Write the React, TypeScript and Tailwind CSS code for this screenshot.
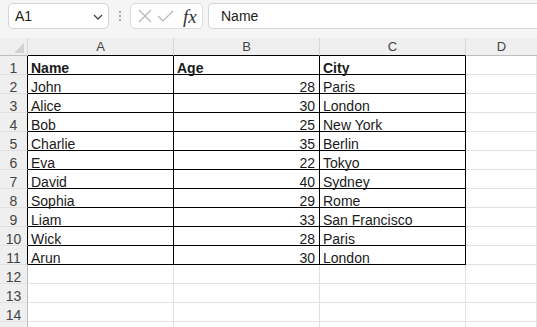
import React from "react";

const data: [string, string, string][] = [
  ["John", "28", "Paris"],
  ["Alice", "30", "London"],
  ["Bob", "25", "New York"],
  ["Charlie", "35", "Berlin"],
  ["Eva", "22", "Tokyo"],
  ["David", "40", "Sydney"],
  ["Sophia", "29", "Rome"],
  ["Liam", "33", "San Francisco"],
  ["Wick", "28", "Paris"],
  ["Arun", "30", "London"],
];

const cellFont = { fontFamily: '"Liberation Sans", Arial, sans-serif' };

export default function App() {
  const rows: { n: string; cells: [string, string, string]; header?: boolean; inTable: boolean }[] = [];
  rows.push({ n: "1", cells: ["Name", "Age", "City"], header: true, inTable: true });
  data.forEach((d, i) => rows.push({ n: String(i + 2), cells: d, inTable: true }));
  for (let n = 12; n <= 14; n++) rows.push({ n: String(n), cells: ["", "", ""], inTable: false });
  rows.push({ n: "", cells: ["", "", ""], inTable: false });

  return (
    <div className="w-[537px] h-[327px] overflow-hidden bg-white" style={cellFont}>
      {/* toolbar */}
      <div className="h-[38px] bg-[#f5f5f5] flex items-start pt-[3px] pl-[8px]">
        <div className="w-[101px] h-[26px] bg-white border border-[#d4d4d4] rounded-[5px] flex items-center pl-[6px] pr-[4px] justify-between">
          <span className="text-[14px] text-[#222]">A1</span>
          <svg width="12" height="12" viewBox="0 0 12 12" className="mt-[1px]">
            <path d="M2 4 L6 8 L10 4" fill="none" stroke="#444" strokeWidth="1.3" />
          </svg>
        </div>
        <div className="w-[21px] h-[26px] flex items-center justify-center">
          <svg width="4" height="12" viewBox="0 0 4 12">
            <circle cx="2" cy="2" r="1.1" fill="#9a9a9a" />
            <circle cx="2" cy="6" r="1.1" fill="#9a9a9a" />
            <circle cx="2" cy="10" r="1.1" fill="#9a9a9a" />
          </svg>
        </div>
        <div className="w-[73px] h-[26px] bg-white border border-[#dcdcdc] rounded-[5px] flex items-center pl-[7px]">
          <svg width="14" height="14" viewBox="0 0 14 14">
            <path d="M1 1 L13 13 M13 1 L1 13" stroke="#b5b5b5" strokeWidth="1.2" fill="none" />
          </svg>
          <svg width="17" height="14" viewBox="0 0 17 14" className="ml-[5px]">
            <path d="M1 7 L6 12 L16 2" stroke="#b5b5b5" strokeWidth="1.2" fill="none" />
          </svg>
          <span
            className="ml-[9px] text-[19px] italic text-[#333] leading-none"
            style={{ fontFamily: '"Liberation Serif", "Times New Roman", serif' }}
          >
            fx
          </span>
        </div>
        <div className="ml-[5px] flex-1 h-[26px] bg-white border border-[#d4d4d4] border-r-0 rounded-l-[5px] flex items-center pl-[12px]">
          <span className="text-[14px] text-[#222]">Name</span>
        </div>
      </div>

      {/* column headers */}
      <div className="flex h-[18px] bg-[#efefef]">
        <div className="w-[28px] shrink-0 border-r border-[#d8d8d8] border-b border-b-[#bdbdbd] relative">
          <svg width="10" height="10" viewBox="0 0 10 10" className="absolute right-[3px] bottom-[2px]">
            <path d="M10 0 L10 10 L0 10 Z" fill="#d2d2d2" />
          </svg>
        </div>
        {["A", "B", "C"].map((c) => (
          <div
            key={c}
            className="w-[146px] shrink-0 border-r border-[#d8d8d8] border-b border-b-black flex items-center justify-center pt-[1px] text-[13px] text-[#444]"
          >
            {c}
          </div>
        ))}
        <div className="flex-1 border-b border-[#bdbdbd] flex items-center justify-center pt-[1px] text-[13px] text-[#444]">
          <span className="w-[70px] text-center">D</span>
        </div>
      </div>

      {/* rows */}
      {rows.map((r, idx) => {
        const bc = r.inTable ? "border-black" : "border-[#e1e1e1]";
        return (
          <div key={idx} className="flex h-[19px]">
            <div
              className={`w-[28px] shrink-0 bg-[#efefef] border-b border-b-[#e1e1e1] border-r ${
                r.inTable ? "border-r-black" : "border-r-[#bdbdbd]"
              } flex items-start justify-center pt-[5px] text-[14px] leading-[15px] text-[#444]`}
            >
              {r.n}
            </div>
            {r.cells.map((v, i) => (
              <div
                key={i}
                className={`w-[146px] shrink-0 border-r border-b ${bc} flex items-start pt-[5px] text-[14px] leading-[15px] text-[#1a1a1a] ${
                  i === 1 && !r.header ? "justify-end pr-[4px]" : "pl-[3px]"
                } ${r.header ? "font-bold" : ""}`}
              >
                {v}
              </div>
            ))}
            <div className="flex-1 flex">
              <div className="w-[71px] shrink-0 border-r border-b border-[#e1e1e1]" />
            </div>
          </div>
        );
      })}
    </div>
  );
}
